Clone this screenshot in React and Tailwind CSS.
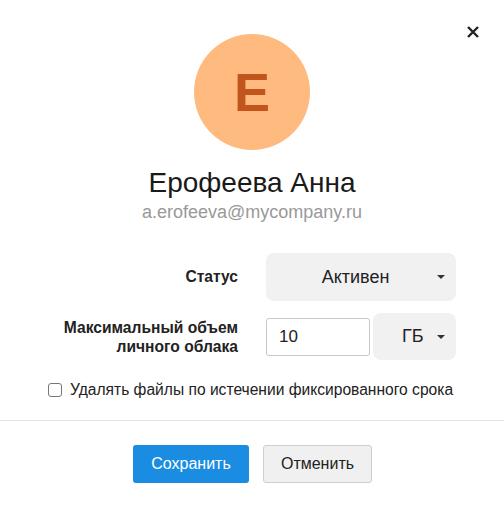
import React from "react";

function Caret() {
  return <span className="block w-0 h-0 border-x-[4px] border-x-transparent border-t-[4px] border-t-[#333]" />;
}

export default function App() {
  return (
    <div className="w-[504px] h-[506px] bg-white text-[#222] font-['Liberation_Sans',Arial,sans-serif] flex flex-col relative">
      <button className="absolute right-[23px] top-[24px] w-[16px] h-[16px] flex items-center justify-center">
        <svg width="14" height="14" viewBox="0 0 14 14">
          <path d="M2 2 L12 12 M12 2 L2 12" stroke="#222" strokeWidth="2.4" />
        </svg>
      </button>

      {/* Header */}
      <div className="flex flex-col items-center pt-[34px]">
        <div className="w-[116px] h-[116px] rounded-full bg-[#ffba80] flex items-center justify-center">
          <span className="text-[54px] font-bold text-[#c2541d] leading-none">E</span>
        </div>
        <div className="mt-[16px] text-[28px] leading-[34px] text-[#1a1a1a]">Ерофеева Анна</div>
        <div className="mt-[1px] text-[18px] leading-[22px] text-[#999]">a.erofeeva@mycompany.ru</div>
      </div>

      {/* Form */}
      <div className="mt-[30px] flex flex-col gap-[12px]">
        <div className="flex items-center">
          <div className="w-[238px] text-right font-bold text-[15.6px]">Статус</div>
          <div className="ml-[28px] w-[190px] h-[48px] rounded-[8px] bg-[#f1f1f2] flex items-center pr-[11px]">
            <span className="flex-1 text-center text-[18px] pl-[8px]">Активен</span>
            <Caret />
          </div>
        </div>
        <div className="flex items-center">
          <div className="w-[238px] text-right font-bold text-[15.6px] leading-[19px]">
            Максимальный объем<br />личного облака
          </div>
          <div className="ml-[28px] flex items-center gap-[3px]">
            <div className="w-[104px] h-[38px] border border-[#c8c8c8] rounded-[3px] flex items-center px-[12px] text-[17px]">10</div>
            <div className="w-[83px] h-[47px] rounded-[8px] bg-[#f1f1f2] flex items-center justify-between pl-[29px] pr-[11px]">
              <span className="text-[18px]">ГБ</span>
              <Caret />
            </div>
          </div>
        </div>
      </div>

      <label className="mt-[18px] ml-[48px] flex items-center gap-[8px] text-[15.6px] text-[#222]">
        <span className="w-[14px] h-[14px] border border-[#777] rounded-[3px] bg-white" />
        Удалять файлы по истечении фиксированного срока
      </label>

      <div className="mt-[19px] border-t border-[#e3e3e3]" />

      <div className="mt-[24px] flex justify-center gap-[14px] pl-[1px]">
        <button className="w-[116px] h-[38px] rounded-[3px] bg-[#1a8de3] text-white text-[16px]">Сохранить</button>
        <button className="w-[109px] h-[38px] rounded-[3px] bg-[#f0f0f0] border border-[#cfcfcf] text-[#222] text-[16px]">Отменить</button>
      </div>
    </div>
  );
}
